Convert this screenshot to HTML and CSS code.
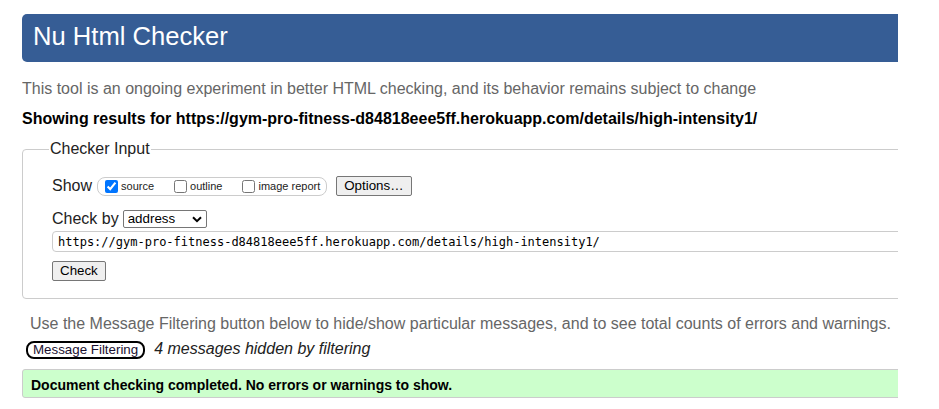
FILE: index.html
```html
<!DOCTYPE html>
<html lang="en">
<head>
<meta charset="utf-8">
<title>Nu Html Checker</title>
<link rel="stylesheet" href="styles.css">
</head>
<body>
<div class="page">
  <h1 class="banner">Nu Html Checker</h1>
  <p class="intro">This tool is an ongoing experiment in better HTML checking, and its behavior remains subject to change</p>
  <p class="results">Showing results for https://gym-pro-fitness-d84818eee5ff.herokuapp.com/details/high-intensity1/</p>
  <fieldset class="checker">
    <legend class="checker-legend">Checker Input</legend>
    <div class="row show-row">
      <span class="row-label">Show</span>
      <span class="pill">
        <label class="opt"><input class="box" type="checkbox" checked><span>source</span></label>
        <label class="opt"><input class="box" type="checkbox"><span>outline</span></label>
        <label class="opt"><input class="box" type="checkbox"><span>image report</span></label>
      </span>
      <button class="btn options-btn" type="button">Options…</button>
    </div>
    <div class="row by-row">
      <span class="row-label">Check by</span>
      <span class="select-wrap">
        <select class="select"><option>address</option></select>
        <svg class="chev" width="10" height="7" viewBox="0 0 10 7" aria-hidden="true"><path d="M1 1.2 L5 5.2 L9 1.2" fill="none" stroke="#000" stroke-width="2"/></svg>
      </span>
    </div>
    <input class="url" type="text" value="https://gym-pro-fitness-d84818eee5ff.herokuapp.com/details/high-intensity1/">
    <div class="submit-row">
      <button class="btn" type="button">Check</button>
    </div>
  </fieldset>
  <p class="hint">Use the Message Filtering button below to hide/show particular messages, and to see total counts of errors and warnings.</p>
  <div class="filter-row">
    <button class="filter-btn" type="button">Message Filtering</button>
    <span class="filter-note">4 messages hidden by filtering</span>
  </div>
  <div class="success">Document checking completed. No errors or warnings to show.</div>
</div>
</body>
</html>
```
FILE: styles.css
```css
html, body {
  margin: 0;
  padding: 0;
  background: #fff;
}
body {
  font-family: "Liberation Sans", Arial, sans-serif;
  color: #222;
}
.page {
  margin-left: 22px;
  width: 876px;
  overflow: hidden;
  padding-top: 14px;
  padding-bottom: 10px;
}
.banner {
  margin: 0 -20px 0 0;
  height: 48px;
  box-sizing: border-box;
  padding: 0 0 0 11px;
  background: #365d95;
  color: #fff;
  font-size: 25.6px;
  font-weight: normal;
  line-height: 44px;
  border-radius: 5px;
}
.intro {
  margin: 18px 0 0 0;
  font-size: 16px;
  line-height: 18px;
  color: #666;
}
.results {
  margin: 12px 0 0 0;
  font-size: 16px;
  line-height: 18px;
  font-weight: bold;
  color: #000;
}
.checker {
  margin: 12px 0 0 0;
  width: calc(100% + 40px);
  box-sizing: border-box;
  border: 1px solid #ccc;
  border-radius: 4px;
  padding: 18px 0 17px 29px;
}
.checker-legend {
  margin-left: -3px;
  padding: 0 1px;
  font-size: 16px;
  line-height: 18px;
  color: #222;
}
.row {
  display: flex;
  align-items: center;
}
.row-label {
  font-size: 16px;
  line-height: 18px;
  color: #222;
}
.show-row {
  height: 20px;
}
.pill {
  display: inline-flex;
  align-items: center;
  gap: 20px;
  height: 19px;
  box-sizing: border-box;
  margin-left: 5px;
  padding: 0 6px 0 7px;
  border: 1px solid #ccc;
  border-radius: 8px;
}
.opt {
  display: inline-flex;
  align-items: center;
  gap: 3px;
  font-size: 11px;
  color: #222;
}
.box {
  margin: 0;
  width: 13px;
  height: 13px;
}
.btn {
  font-family: "Liberation Sans", Arial, sans-serif;
  font-size: 13.33px;
  color: #000;
  background: #efefef;
  border: 1px solid #767676;
  border-radius: 2px;
  height: 20px;
  padding: 0 7px;
  line-height: 18px;
}
.options-btn {
  margin-left: 9px;
}
.by-row {
  margin-top: 14px;
  height: 18px;
}
.select-wrap {
  position: relative;
  display: inline-flex;
  margin-left: 4px;
}
.select {
  -webkit-appearance: none;
  appearance: none;
  height: 18px;
  width: 84px;
  box-sizing: border-box;
  font-family: "Liberation Sans", Arial, sans-serif;
  font-size: 13.33px;
  line-height: 16px;
  color: #000;
  background: #fff;
  border: 1px solid #767676;
  border-radius: 2px;
  padding: 0 0 0 4px;
  margin: 0;
}
.chev {
  position: absolute;
  right: 5px;
  top: 6px;
  pointer-events: none;
}
.url {
  display: block;
  margin: 3px 0 0 0;
  width: 100%;
  height: 21px;
  box-sizing: border-box;
  border: 1px solid #ccc;
  border-radius: 4px 0 0 4px;
  padding: 0 5px;
  font-family: "DejaVu Sans Mono", "Liberation Mono", monospace;
  font-size: 12px;
  color: #000;
  background: #fff;
}
.submit-row {
  margin-top: 9px;
  display: flex;
}
.hint {
  margin: 16px 0 0 8px;
  font-size: 16px;
  line-height: 18px;
  color: #666;
}
.filter-row {
  margin: 8px 0 0 4px;
  display: flex;
  align-items: flex-start;
  gap: 9px;
}
.filter-btn {
  height: 18px;
  box-sizing: border-box;
  padding: 0 5px;
  border: 2px solid #000;
  border-radius: 8px;
  background: #fff;
  font-family: "Liberation Sans", Arial, sans-serif;
  font-size: 13.33px;
  line-height: 14px;
  color: #1a1030;
}
.filter-note {
  font-size: 16px;
  line-height: 15px;
  font-style: italic;
  color: #222;
}
.success {
  margin: 10px -20px 0 0;
  height: 29px;
  box-sizing: border-box;
  border: 1px solid #ccc;
  border-radius: 3px;
  background: #ccffcc;
  padding: 7px 0 0 8px;
  font-size: 14px;
  line-height: 16px;
  font-weight: bold;
  color: #000;
}
```
